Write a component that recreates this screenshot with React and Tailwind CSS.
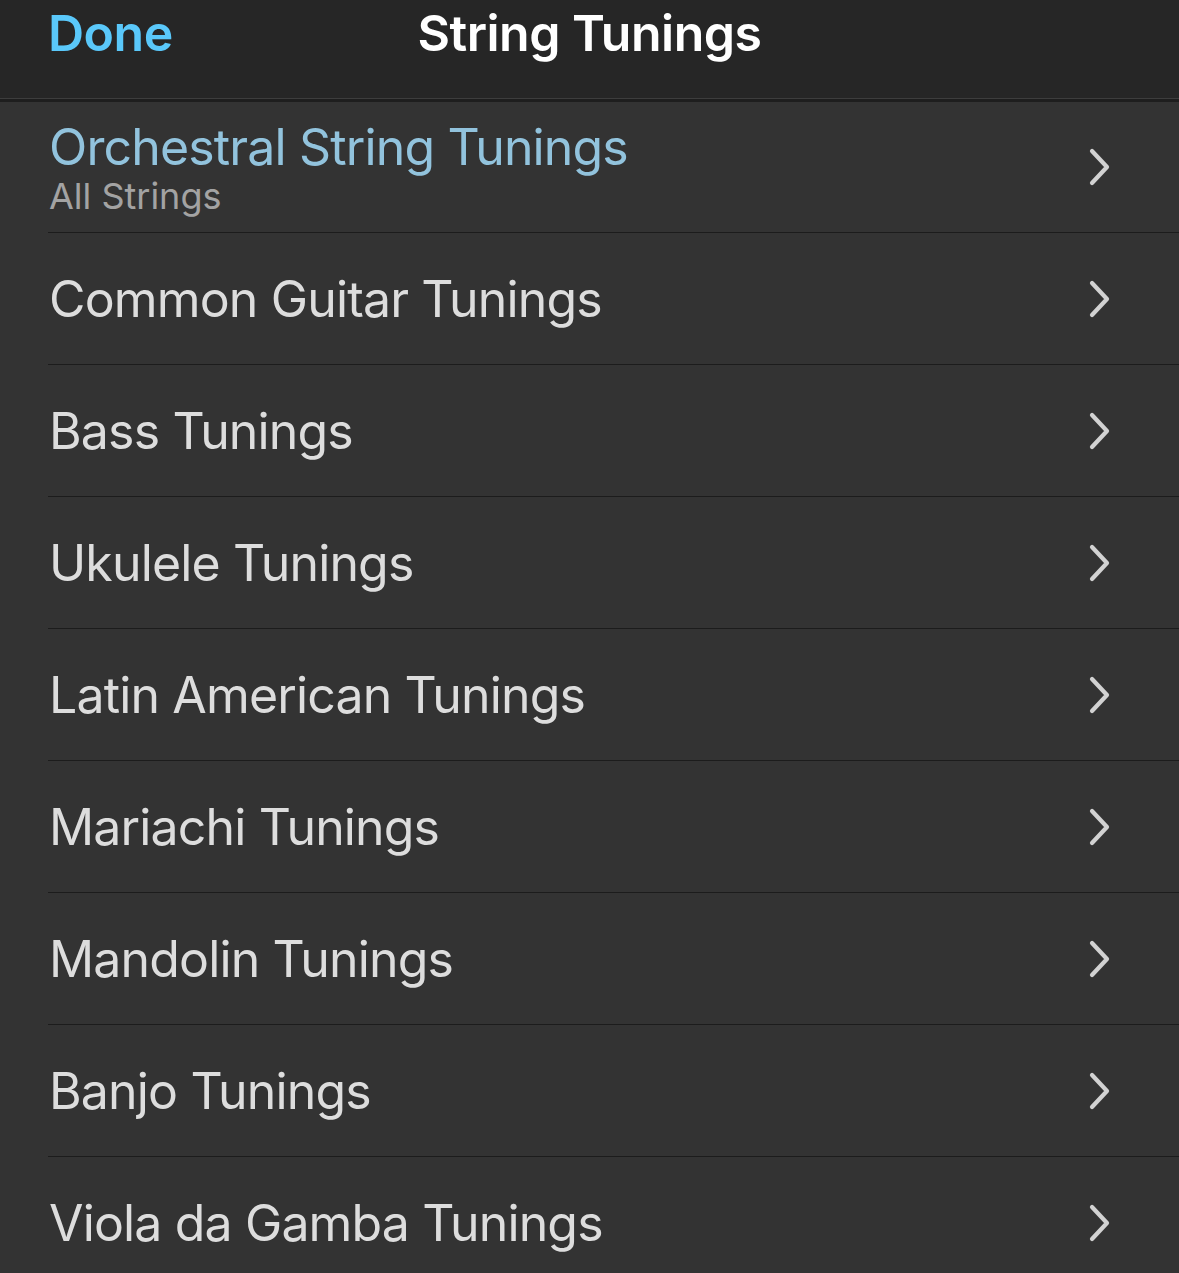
import React from "react";

const rows = [
  "Common Guitar Tunings",
  "Bass Tunings",
  "Ukulele Tunings",
  "Latin American Tunings",
  "Mariachi Tunings",
  "Mandolin Tunings",
  "Banjo Tunings",
  "Viola da Gamba Tunings",
];

function Chevron() {
  return (
    <svg width="24" height="38" viewBox="0 0 24 38" className="shrink-0">
      <path d="M4 3 L19 19 L4 35" fill="none" stroke="#d2d2d2" strokeWidth="4.2" strokeLinecap="round" strokeLinejoin="round" />
    </svg>
  );
}

export default function App() {
  return (
    <div
      className="w-[1179px] h-[1273px] overflow-hidden bg-[#333333] flex flex-col"
      style={{ fontFamily: "Inter, 'Noto Sans', sans-serif" }}
    >
      <div className="h-[98px] bg-[#262626] relative shrink-0 flex items-start">
        <div className="pl-[48px] pt-[3px] text-[50px] font-semibold text-[#5ac8fa] leading-[60px] tracking-[-0.5px]">Done</div>
        <div className="absolute left-0 right-0 top-[3px] text-center text-[50px] font-semibold text-white leading-[60px] tracking-[-0.5px]">
          String Tunings
        </div>
      </div>
      <div className="h-[1px] bg-[#3d3d3d] shrink-0" />
      <div className="h-[3px] bg-[#1e1e1e] shrink-0" />
      <div className="flex flex-col">
        <div className="h-[130px] flex items-center pl-[49px] pr-[67px] shrink-0">
          <div className="flex-1 flex flex-col pt-[4px]">
            <div className="text-[50px] leading-[50px] text-[#92c3dd] tracking-[-0.85px]">Orchestral String Tunings</div>
            <div className="text-[36px] leading-[40px] mt-[4px] text-[#a3a3a3]">All Strings</div>
          </div>
          <Chevron />
        </div>
        {rows.map((r) => (
          <div key={r} className="shrink-0">
            <div className="h-[1px] bg-[#1c1c1c] ml-[48px]" />
            <div className="h-[131px] flex items-center pl-[49px] pr-[67px]">
              <div className="flex-1 text-[50px] leading-[60px] text-[#dddddd] tracking-[-0.85px]">{r}</div>
              <Chevron />
            </div>
          </div>
        ))}
      </div>
    </div>
  );
}
